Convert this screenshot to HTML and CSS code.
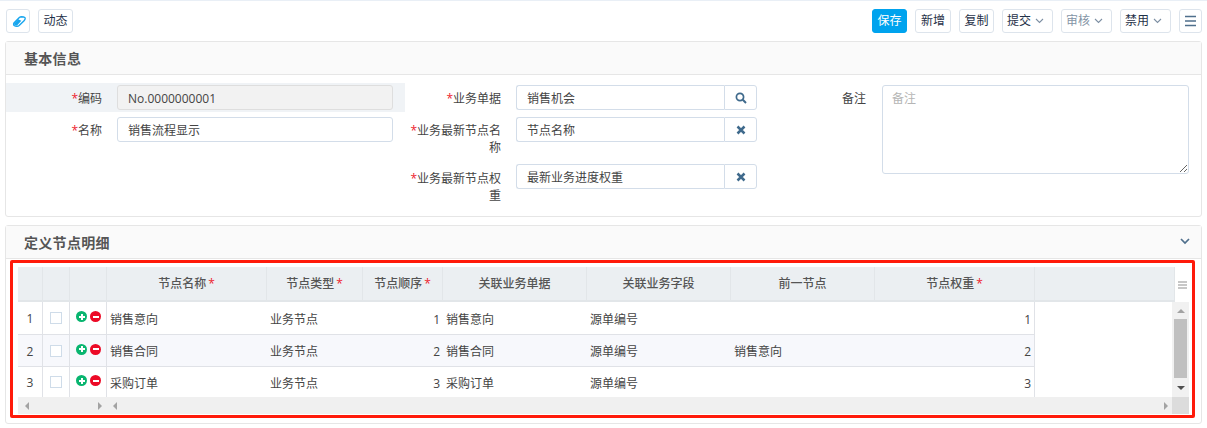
FILE: index.html
```html
<!DOCTYPE html>
<html lang="zh">
<head>
<meta charset="utf-8">
<title>销售流程显示</title>
<link rel="stylesheet" href="styles.css">
</head>
<body>
<div class="toolbar">
  <button class="btn btn-icon"><svg width="15" height="11" viewBox="0 0 16 13"><path d="M1.4 8.4 7.8 1.8Q8.8.9 10.4.9L13 1.1Q15 1.5 14.7 3.2 14.4 4.6 13.4 5.6L7.6 11.2Q6.6 12.1 5 12.1L3 12Q.8 11.4 1 9.6Z" fill="none" stroke="#18a6ee" stroke-width="1.7"/><path d="M1.6 8.8 6.4 3.8 10.2 5.6 5.6 10.6Q4 11.8 2.6 11Q1.2 10.2 1.6 8.8Z" fill="#18a6ee"/></svg></button>
  <button class="btn btn-text">动态</button>
  <span class="spacer"></span>
  <button class="btn btn-primary">保存</button>
  <button class="btn">新增</button>
  <button class="btn btn-text">复制</button>
  <button class="btn btn-drop">提交<svg class="caret" width="9" height="6" viewBox="0 0 9 6"><path d="M1 1 4.5 4.5 8 1" fill="none" stroke="#7d8fa3" stroke-width="1.1"/></svg></button>
  <button class="btn btn-drop btn-muted">审核<svg class="caret" width="9" height="6" viewBox="0 0 9 6"><path d="M1 1 4.5 4.5 8 1" fill="none" stroke="#7d8fa3" stroke-width="1.1"/></svg></button>
  <button class="btn btn-drop">禁用<svg class="caret" width="9" height="6" viewBox="0 0 9 6"><path d="M1 1 4.5 4.5 8 1" fill="none" stroke="#7d8fa3" stroke-width="1.1"/></svg></button>
  <button class="btn btn-menu"><svg width="13" height="12" viewBox="0 0 13 12"><path d="M1 1.5H12M1 6H12M1 10.5H12" stroke="#4f6f8c" stroke-width="1.4"/></svg></button>
</div>

<section class="panel panel-info">
  <header class="panel-head"><h2>基本信息</h2></header>
  <div class="form">
    <div class="form-col">
      <div class="field field-hl">
        <label class="lbl"><i>*</i>编码</label>
        <div class="ctl"><input class="inp inp-off" value="No.0000000001" readonly></div>
      </div>
      <div class="field">
        <label class="lbl"><i>*</i>名称</label>
        <div class="ctl"><input class="inp" value="销售流程显示"></div>
      </div>
    </div>
    <div class="form-col form-col-mid">
      <div class="field">
        <label class="lbl"><i>*</i>业务单据</label>
        <div class="ctl group"><input class="inp" value="销售机会"><span class="addon"><svg width="12" height="12" viewBox="0 0 12 12"><circle cx="5" cy="5" r="3.6" fill="none" stroke="#3f6a8c" stroke-width="1.7"/><path d="M7.8 7.8 11 11" stroke="#3f6a8c" stroke-width="2"/></svg></span></div>
      </div>
      <div class="field field-wrap">
        <label class="lbl"><i>*</i>业务最新节点名称</label>
        <div class="ctl group"><input class="inp" value="节点名称"><span class="addon"><svg width="10" height="10" viewBox="0 0 10 10"><path d="M1.5 1.5 8.5 8.5M8.5 1.5 1.5 8.5" stroke="#3f6a8c" stroke-width="2.5"/></svg></span></div>
      </div>
      <div class="field field-wrap field-last">
        <label class="lbl"><i>*</i>业务最新节点权重</label>
        <div class="ctl group"><input class="inp" value="最新业务进度权重"><span class="addon"><svg width="10" height="10" viewBox="0 0 10 10"><path d="M1.5 1.5 8.5 8.5M8.5 1.5 1.5 8.5" stroke="#3f6a8c" stroke-width="2.5"/></svg></span></div>
      </div>
    </div>
    <div class="form-col form-col-end">
      <div class="field">
        <label class="lbl lbl-plain">备注</label>
        <div class="ctl"><textarea class="area" placeholder="备注"></textarea></div>
      </div>
    </div>
  </div>
</section>

<section class="panel panel-detail">
  <header class="panel-head">
    <h2>定义节点明细</h2>
    <svg class="collapse" width="10" height="7" viewBox="0 0 10 7"><path d="M1 1 5 5 9 1" fill="none" stroke="#4f6f8c" stroke-width="1.7"/></svg>
  </header>
  <div class="mark">
    <div class="grid">
      <div class="grid-head">
        <div class="row row-head">
          <div class="th"></div><div class="th"></div><div class="th"></div>
          <div class="th">节点名称<i>*</i></div>
          <div class="th">节点类型<i>*</i></div>
          <div class="th">节点顺序<i>*</i></div>
          <div class="th">关联业务单据</div>
          <div class="th">关联业务字段</div>
          <div class="th">前一节点</div>
          <div class="th">节点权重<i>*</i></div>
        </div>
        <div class="th th-fill"></div>
        <div class="grip"><svg width="9" height="8" viewBox="0 0 9 8"><path d="M0 1H9M0 4H9M0 7H9" stroke="#b5b5b5" stroke-width="1.3"/></svg></div>
      </div>
      <div class="grid-body">
        <div class="rows">
          <div class="row">
            <div class="td c ln">1</div><div class="td c ln"><span class="chk"></span></div>
            <div class="td ops ln"><span class="op op-add"></span><span class="op op-del"></span></div>
            <div class="td">销售意向</div><div class="td">业务节点</div><div class="td r">1</div><div class="td">销售意向</div><div class="td">源单编号</div><div class="td"></div><div class="td r ln">1</div>
          </div>
          <div class="row row-alt">
            <div class="td c ln">2</div><div class="td c ln"><span class="chk"></span></div>
            <div class="td ops ln"><span class="op op-add"></span><span class="op op-del"></span></div>
            <div class="td">销售合同</div><div class="td">业务节点</div><div class="td r">2</div><div class="td">销售合同</div><div class="td">源单编号</div><div class="td">销售意向</div><div class="td r ln">2</div>
          </div>
          <div class="row row-cut">
            <div class="td c ln">3</div><div class="td c ln"><span class="chk"></span></div>
            <div class="td ops ln"><span class="op op-add"></span><span class="op op-del"></span></div>
            <div class="td">采购订单</div><div class="td">业务节点</div><div class="td r">3</div><div class="td">采购订单</div><div class="td">源单编号</div><div class="td"></div><div class="td r ln">3</div>
          </div>
        </div>
        <div class="vscroll">
          <span class="tri tri-up"></span>
          <span class="thumb"></span>
          <span class="tri tri-down"></span>
        </div>
      </div>
      <div class="hscroll">
        <div class="hs-frozen"><span class="tri tri-left"></span><span class="tri tri-right"></span></div>
        <div class="hs-main"><span class="tri tri-left"></span><span class="tri tri-right"></span></div>
        <div class="hs-corner"></div>
      </div>
    </div>
  </div>
</section>
</body>
</html>
```

FILE: styles.css
```css
* { box-sizing: border-box; }
html, body { margin: 0; padding: 0; }
body {
  width: 1207px;
  height: 428px;
  overflow: hidden;
  background: #fff;
  border-top: 1px solid #e9eff6;
  padding: 8px 5px 0 6px;
  font: 12px/1.4 "Open Sans", "Noto Sans CJK SC", sans-serif;
  color: #444;
}
i { font-style: normal; color: #ee1c2e; }

.toolbar { display: flex; align-items: stretch; gap: 8px; height: 24px; }
.spacer { flex: 1; }
.btn {
  height: 24px;
  width: 36px;
  padding: 0;
  background: #fff;
  border: 1px solid #dde4ec;
  border-radius: 3px;
  font: inherit;
  color: #1f3148;
  display: inline-flex;
  align-items: center;
  justify-content: center;
}
.btn-icon { width: 24px; padding: 1px 0 0 2px; }
.btn-text { width: 35px; }
.btn-primary { width: 35px; background: #00a3ee; border-color: #00a3ee; color: #fff; }
.btn-drop { width: 51px; gap: 4px; justify-content: flex-start; padding-left: 4px; }
.btn-muted { color: #8494a5; }
.btn-menu { width: 23px; }

.panel {
  margin-left: -1px;
  border: 1px solid #e6e6e6;
  border-radius: 3px;
  background: #fff;
}
.panel-info { margin-top: 8px; height: 176px; }
.panel-detail { margin-top: 8px; height: 199px; }
.panel-head {
  height: 33px;
  padding: 1px 11px 0 18px;
  background: #fafafa;
  border-bottom: 1px solid #e6e6e6;
  display: flex;
  align-items: center;
  justify-content: space-between;
}
.panel-head h2 { margin: 0; font-size: 14px; font-weight: 700; color: #555; letter-spacing: .3px; }
.collapse { margin-top: -2px; }

.form { display: flex; padding-top: 8px; }
.form-col { display: flex; flex-direction: column; gap: 3px; }
.form-col:first-child { width: 399px; }
.form-col-mid { width: 366px; }
.form-col-end { flex: 1; }

.field { display: flex; align-items: flex-start; gap: 15px; padding: 2px 12px 2px 0; }
.field-hl { background: #f0f3f6; }
.lbl { width: 96px; flex: none; text-align: right; line-height: 17px; padding-top: 5px; color: #444; }
.form-col-mid .field { padding-right: 14px; }
.field-wrap { min-height: 44px; }
.field-last { min-height: 50px; }
.field-last .lbl { padding-top: 6px; }
.form-col-end .lbl { width: 95px; margin-right: 1px; }
.ctl { flex: 1; display: flex; }
.inp {
  flex: 1;
  min-width: 0;
  height: 25px;
  padding: 1px 10px 0;
  border: 1px solid #d3dde9;
  border-radius: 3px;
  background: #fff;
  font: inherit;
  color: #444;
  outline: none;
}
.inp-off { background: #f2f2f2; border-color: #dedede; }
.group .inp { border-radius: 3px 0 0 3px; border-right: 0; }
.addon {
  width: 33px;
  height: 25px;
  flex: none;
  border: 1px solid #d3dde9;
  border-radius: 0 3px 3px 0;
  display: flex;
  align-items: center;
  justify-content: center;
}
.area {
  flex: 1;
  display: block;
  height: 89px;
  padding: 5px 9px;
  border: 1px solid #d3dde9;
  border-radius: 3px;
  font: inherit;
  color: #444;
  outline: none;
}
.area::placeholder { color: #b5b5b5; }

.mark {
  margin: 1px 6px 0 4px;
  height: 158px;
  border: 3px solid #ff1a0a;
  border-radius: 2px;
  padding: 4px 3px 1px 5px;
}
.grid { height: 147px; display: flex; flex-direction: column; }
.grid-head { display: flex; height: 35px; flex: none; }
.row {
  display: grid;
  grid-template-columns: 25px 27px 37px 160px 96px 80px 144px 144px 144px 160px;
  width: 1017px;
}
.th {
  background: #ebeff2;
  border-right: 1px solid #e2e6e9;
  border-bottom: 2px solid #e2e6e9;
  height: 35px;
  padding-top: 1px;
  display: flex;
  align-items: center;
  justify-content: center;
  font-weight: 500;
  color: #555;
}
.th i { margin-left: 2px; }
.th-fill { width: 140px; flex: none; }
.grip { flex: 1; display: flex; align-items: center; justify-content: center; }

.grid-body { display: flex; height: 95px; flex: none; overflow: hidden; }
.rows { width: 1154px; flex: none; }
.row .td {
  height: 33px;
  border-bottom: 1px solid #e0e2e7;
  display: flex;
  align-items: center;
  padding: 4px 3px 0;
  color: #444;
}
.row .td.ln { border-right: 1px solid #e0e2e7; }
.row-alt .td { height: 32px; background: #f7f8fc; }
.row-cut .td { height: 30px; border-bottom: 0; padding-top: 5px; }
.td.c { justify-content: center; }
.td.r { justify-content: flex-end; }
.row .td.c { padding-top: 3px; }
.chk { width: 12px; height: 12px; border: 1px solid #cfdce9; background: #fff; margin-top: -3px; }
.row .td.ops { padding: 0 0 3px 6px; gap: 3px; }
.op { width: 11px; height: 11px; border-radius: 50%; position: relative; flex: none; }
.op-add { background: #08b56f; }
.op-del { background: #ec0a26; }
.op::before { content: ""; position: absolute; left: 2.5px; top: 4.5px; width: 6px; height: 2px; background: #fff; }
.op-add::after { content: ""; position: absolute; left: 4.5px; top: 2.5px; width: 2px; height: 6px; background: #fff; }

.vscroll {
  width: 17px;
  flex: none;
  background: #f1f1f1;
  position: relative;
  display: flex;
  flex-direction: column;
  align-items: center;
}
.thumb { position: absolute; left: 2px; top: 17px; width: 13px; height: 59px; background: #c0c0c0; }
.tri { width: 0; height: 0; border: 4px solid transparent; flex: none; }
.tri-up { position: absolute; top: 7px; border-top: 0; border-bottom: 4px solid #a3a3a3; }
.tri-down { position: absolute; bottom: 7px; border-bottom: 0; border-top: 4px solid #505050; }
.tri-left { border-left: 0; border-right: 4px solid #a3a3a3; }
.tri-right { border-right: 0; border-left: 4px solid #a3a3a3; }

.hscroll { display: flex; height: 17px; flex: none; background: #f0f0f0; }
.hs-frozen, .hs-main { display: flex; align-items: center; justify-content: space-between; }
.hs-frozen { width: 89px; padding: 0 5px 0 7px; }
.hs-main { flex: 1; padding: 0 4px 0 6px; }
.hs-corner { width: 17px; background: #dcdcdc; }
```
